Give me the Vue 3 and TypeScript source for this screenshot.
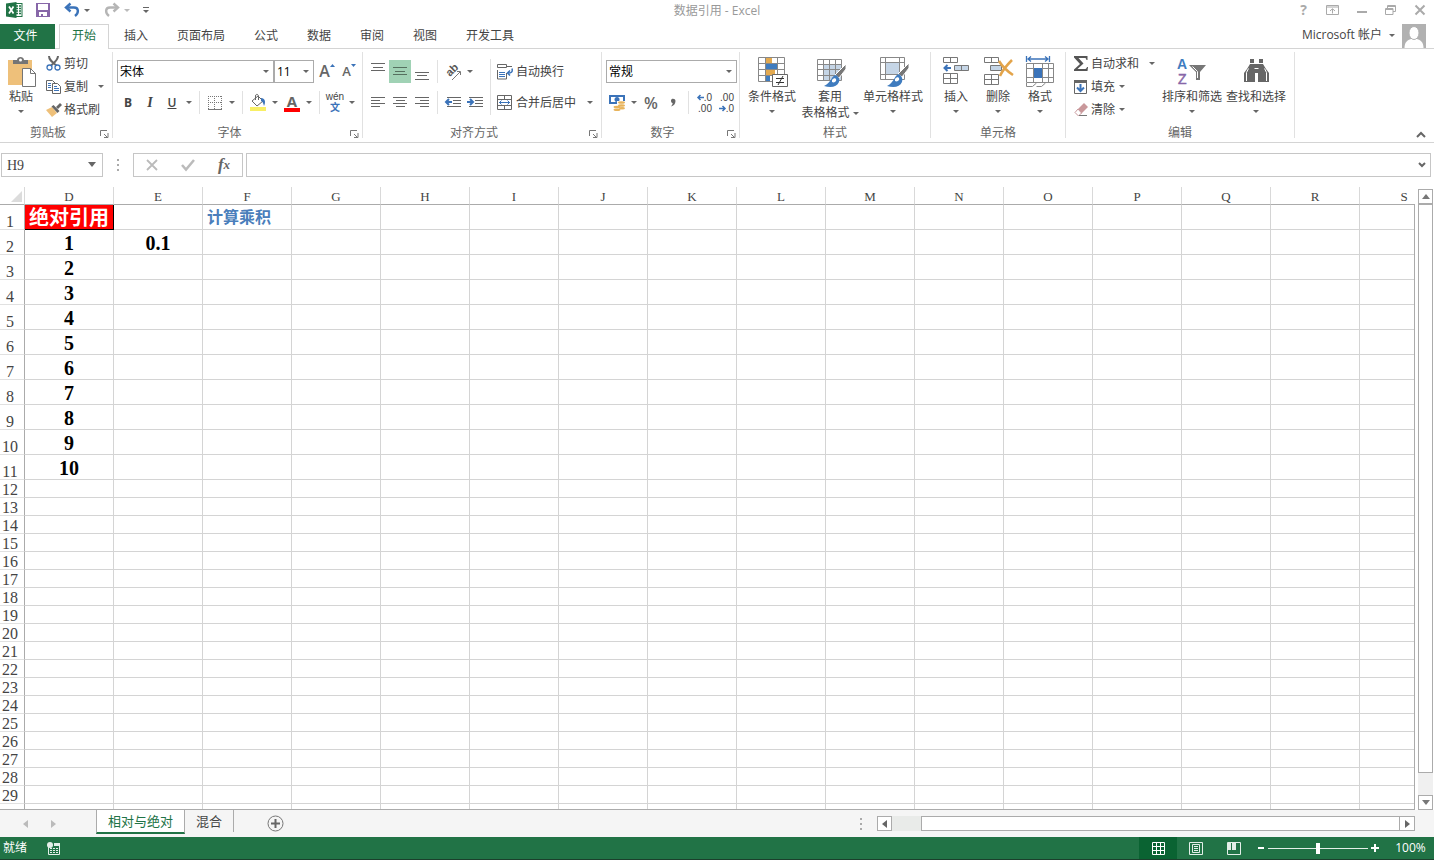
<script setup lang="ts">
import { ref } from 'vue'

interface SheetRow {
  n: number
  d?: string
  e?: string
}

const tabs = ['开始', '插入', '页面布局', '公式', '数据', '审阅', '视图', '开发工具']
const activeTab = ref('开始')
const columns = 'DEFGHIJKLMNOPQRS'.split('')
const rows: SheetRow[] = Array.from({ length: 29 }, (_, i) => {
  const n = i + 1
  return {
    n,
    d: n === 1 ? '绝对引用' : n <= 11 ? String(n - 1) : '',
    e: n === 2 ? '0.1' : '',
  }
})
const sheets = ['相对与绝对', '混合']
const activeSheet = ref('相对与绝对')
const cellName = ref('H9')
const formula = ref('')
const zoom = ref(50)

function cellText(row: SheetRow, col: string): string {
  if (col === 'D') return row.d ?? ''
  if (col === 'E') return row.e ?? ''
  if (col === 'F' && row.n === 1) return '计算乘积'
  return ''
}
</script>

<template>
  <div class="app">
    <header class="titlebar">
      <div class="quick">
        <svg class="logo" width="18" height="18" viewBox="0 0 18 18">
          <rect x="9" y="2.5" width="7" height="13" fill="#fff" stroke="#217346" />
          <path d="M10 5h2M13 5h2M10 7.500h2M13 7.500h2M10 10h2M13 10h2M10 12.500h2M13 12.500h2" stroke="#217346" stroke-width="1.500" />
          <path d="M0 2.500L10.500 1v16L0 15.500z" fill="#217346" />
          <path d="M3 5.500l4.500 7M7.500 5.500l-4.500 7" stroke="#fff" stroke-width="1.700" />
        </svg>
        <button class="q save" aria-label="保存">
          <svg width="14" height="14" viewBox="0 0 14 14" shape-rendering="crispEdges">
            <path d="M0 0h14v14H0z" fill="#8767a8" />
            <path d="M2 1h10v6H2zM3 9h8v4H7v-2H5v2H3z" fill="#fff" />
          </svg>
        </button>
        <button class="q" aria-label="撤消">
          <svg width="16" height="16" viewBox="0 0 16 16" fill="none" stroke="#3b73b9" stroke-width="2.400">
            <path d="M6.500 1.500L2 5.500l4.500 4" />
            <path d="M2 5.500h8c5 0 5 5.500 1 8.500" />
          </svg>
          <i class="arr"></i>
        </button>
        <button class="q redo" aria-label="恢复">
          <svg width="16" height="16" viewBox="0 0 16 16" fill="none" stroke="#b5b5b5" stroke-width="2.400">
            <path d="M9.500 1.500L14 5.500l-4.500 4" />
            <path d="M14 5.500H6C1 5.500 1 11 5 14" />
          </svg>
          <i class="arr pale"></i>
        </button>
        <button class="q custom" aria-label="自定义快速访问工具栏"><i class="bar"></i><i class="arr"></i></button>
      </div>
      <h1>数据引用 - Excel</h1>
      <div class="winctl">
        <button aria-label="帮助" class="help">?</button>
        <button aria-label="功能区显示选项">
          <svg width="13" height="10" viewBox="0 0 13 10" fill="none" stroke="#aaa">
            <path d="M.5.5h12v9H.5zM0 2h13M6.500 8.500V4M4 6l2.500-2.300L9 6" />
          </svg>
        </button>
        <button aria-label="最小化">
          <svg width="10" height="10"><path d="M0 7h10" stroke="#aaa" stroke-width="2" /></svg>
        </button>
        <button aria-label="还原">
          <svg width="11" height="10" viewBox="0 0 11 10" fill="none" stroke="#aaa">
            <path d="M2.500 3V.5h8v6H8M2 1.500h9M.5 3.500H8v6H.5zM0 4.500h8" />
          </svg>
        </button>
        <button aria-label="关闭">
          <svg width="10" height="10"><path d="M.5.5l9 9M9.500.5l-9 9" stroke="#aaa" stroke-width="2" /></svg>
        </button>
      </div>
    </header>

    <nav class="tabs">
      <button class="file">文件</button>
      <button v-for="t in tabs" :key="t" class="tab" :class="{ on: t === activeTab }" @click="activeTab = t">{{ t }}</button>
      <button class="account">Microsoft 帐户<i class="arr"></i></button>
      <svg class="avatar" width="24" height="24" viewBox="0 0 24 24">
        <path d="M0 0h24v24H0z" fill="#b1b1b1" />
        <path d="M2.500 24c0-6 3-8 6.500-9h6c3.500 1 6.500 3 6.500 9z" fill="#fff" />
        <ellipse cx="12" cy="9" rx="5" ry="6.500" fill="#fff" stroke="#b1b1b1" />
      </svg>
    </nav>

    <section class="ribbon">
      <div class="group clip">
        <div class="body">
          <button class="big">
            <svg width="32" height="32" viewBox="0 0 32 32">
              <path d="M3 4h24v25H3z" fill="#eec07a" />
              <path d="M8 8V4h4c0-4 7-4 7 0h4v4z" fill="#757575" />
              <circle cx="15.500" cy="4" r="1.500" fill="#fff" />
              <path d="M17.500 12.500h8l5 5v13h-13z" fill="#fff" stroke="#757575" />
              <path d="M25.500 12.500v5h5" fill="none" stroke="#757575" />
            </svg>
            <span>粘贴</span><i class="arr"></i>
          </button>
          <div class="smalls">
            <button>
              <svg width="16" height="16" viewBox="0 0 16 16" fill="none">
                <path d="M3 0c0 4 3 6 7.500 9.500M12 0c0 4-3 6-7 9.500" stroke="#666" stroke-width="2" />
                <circle cx="3.500" cy="11.500" r="2.500" stroke="#3b73b9" stroke-width="1.300" />
                <circle cx="11.500" cy="11.500" r="2.500" stroke="#3b73b9" stroke-width="1.300" />
              </svg>剪切
            </button>
            <button>
              <svg width="16" height="16" viewBox="0 0 16 16" fill="#fff" stroke="#666">
                <path d="M.5 1.500h6l3 3v7h-9z" /><path d="M6.500 4.500h5l3 3v7h-8z" />
                <path d="M2 4.500h3M2 6.500h3M2 8.500h3M8 9.500h5M8 11.500h5M8 7.500h3" stroke="#3b73b9" />
              </svg>复制<i class="arr far"></i>
            </button>
            <button>
              <svg width="16" height="16" viewBox="0 0 16 16">
                <path d="M0 8l6-3 5 6-5 4z" fill="#eec07a" />
                <path d="M5.500 4.500l2-1.500 6 6-2 2z" fill="#666" /><path d="M10 5l4-4 2 2-4 4z" fill="#666" />
              </svg>格式刷
            </button>
          </div>
        </div>
        <footer><span>剪贴板</span><button class="launch" aria-label="剪贴板选项"><svg width="9" height="8" viewBox="0 0 9 8" fill="none" stroke="#777"><path d="M.5 6V.5H7M4 4l3 3M8 3v4.500H4" /></svg></button></footer>
      </div>

      <div class="group font">
        <div class="body rows">
          <div class="line">
            <span class="sel face"><select aria-label="字体"><option>宋体</option></select><i class="arr"></i></span>
            <span class="sel size"><select aria-label="字号"><option>11</option></select><i class="arr"></i></span>
            <button class="ib w22 grow" aria-label="增大字号">A<svg width="5" height="3"><path d="M0 3l2.500-3L5 3z" fill="#3b73b9" /></svg></button>
            <button class="ib w22 grow less" aria-label="减小字号">A<svg width="5" height="3"><path d="M0 0l2.500 3L5 0z" fill="#3b73b9" /></svg></button>
          </div>
          <div class="line">
            <button class="ib w22 bold" aria-label="加粗">B</button>
            <button class="ib w22 ital" aria-label="倾斜">I</button>
            <button class="ib w22 und" aria-label="下划线"><u>U</u></button>
            <button class="ib w12" aria-label="下划线样式"><i class="arr"></i></button>
            <i class="sep"></i>
            <button class="ib w22" aria-label="边框">
              <svg width="14" height="14" viewBox="0 0 14 14" fill="none" stroke="#777" shape-rendering="crispEdges">
                <path d="M0 .5h14M.5 0v14M13.500 0v14M6.500 0v14M0 6.500h14" stroke-dasharray="1 1" /><path d="M0 13.500h14" />
              </svg>
            </button>
            <button class="ib w12" aria-label="边框样式"><i class="arr"></i></button>
            <i class="sep"></i>
            <button class="ib w22" aria-label="填充颜色">
              <svg width="16" height="17" viewBox="0 0 16 17">
                <path d="M2 7l6-5 5 5-6 5z" fill="#fff" stroke="#666" /><path d="M5.500 6V2c0-2.500 3.500-2 3 1v3" fill="none" stroke="#666" />
                <path d="M11 4c4 0 5 4 3 8-1-3-1-4-3-5z" fill="#3b73b9" /><path d="M0 13h16v4H0z" fill="#f8ef65" />
              </svg>
            </button>
            <button class="ib w12" aria-label="选择填充颜色"><i class="arr"></i></button>
            <button class="ib w22 color" aria-label="字体颜色">A</button>
            <button class="ib w12" aria-label="选择字体颜色"><i class="arr"></i></button>
            <i class="sep"></i>
            <button class="ib w22 wen" aria-label="拼音"><span>wén</span><b>文</b></button>
            <button class="ib w12" aria-label="拼音设置"><i class="arr"></i></button>
          </div>
        </div>
        <footer><span>字体</span><button class="launch" aria-label="字体选项"><svg width="9" height="8" viewBox="0 0 9 8" fill="none" stroke="#777"><path d="M.5 6V.5H7M4 4l3 3M8 3v4.500H4" /></svg></button></footer>
      </div>

      <div class="group align">
        <div class="body">
          <div class="rows">
            <div class="line">
              <button class="ib w22" aria-label="顶端对齐"><svg width="14" height="18"><path d="M0 .5h14M2 4.500h10M0 7.500h14" stroke="#666" /></svg></button>
              <button class="ib w22 pressed" aria-label="垂直居中"><svg width="14" height="18"><path d="M0 4.500h14M2 8.500h10M0 11.500h14" stroke="#55705f" /></svg></button>
              <button class="ib w22" aria-label="底端对齐"><svg width="14" height="18"><path d="M0 9.500h14M2 12.500h10M0 16.500h14" stroke="#666" /></svg></button>
              <i class="sep"></i>
              <button class="ib w22" aria-label="方向">
                <svg class="glyphs" width="18" height="18" viewBox="0 0 18 18"><text transform="translate(6 14) rotate(-45)" font-size="11" font-weight="600" fill="#555">ab</text><path d="M8 17l8-8M16.500 12V8.500H13" stroke="#777" fill="none" /></svg>
              </button>
              <button class="ib w12" aria-label="方向选项"><i class="arr"></i></button>
            </div>
            <div class="line">
              <button class="ib w22" aria-label="左对齐"><svg width="14" height="11"><path d="M0 .5h14M0 3.500h9M0 6.500h14M0 9.500h9" stroke="#666" /></svg></button>
              <button class="ib w22" aria-label="居中"><svg width="14" height="11"><path d="M0 .5h14M3 3.500h9M0 6.500h14M3 9.500h9" stroke="#666" /></svg></button>
              <button class="ib w22" aria-label="右对齐"><svg width="14" height="11"><path d="M0 .5h14M5 3.500h9M0 6.500h14M5 9.500h9" stroke="#666" /></svg></button>
              <i class="sep"></i>
              <button class="ib w22" aria-label="减少缩进量"><svg width="16" height="11"><path d="M2 .5h14M8 3.500h8M8 6.500h8M2 9.500h14" stroke="#666" /><path d="M7 5H2M4 2L1 5l3 3" stroke="#3b73b9" stroke-width="2" fill="none" /></svg></button>
              <button class="ib w22" aria-label="增加缩进量"><svg width="16" height="11"><path d="M2 .5h14M8 3.500h8M8 6.500h8M2 9.500h14" stroke="#666" /><path d="M0 5h5M3 2l3 3-3 3" stroke="#3b73b9" stroke-width="2" fill="none" /></svg></button>
            </div>
          </div>
          <div class="rows wraps">
            <button class="ib">
              <svg width="16" height="16" viewBox="0 0 16 16" fill="none" stroke="#666">
                <path d="M.5.5h9v3h-9zM10 2.500h5M.5 6v9h9V9" /><path d="M2 8.500h6M2 10.500h6M2 12.500h6" stroke="#3b73b9" />
                <path d="M15 4.500c1 4-1 4.500-4 4.500M13 6.500l-2.500 2.500 2.500 2.500" stroke="#3b73b9" stroke-width="1.500" />
              </svg>自动换行
            </button>
            <button class="ib">
              <svg width="16" height="16" viewBox="0 0 16 16" fill="none" stroke="#666">
                <path d="M.5.5h14v14H.5zM.5 4.500h14M.5 10.500h14M7.500 0v4M7.500 11v4" /><path d="M2 7.500h11M4.500 5.500l-2 2 2 2M10.500 5.500l2 2-2 2" stroke="#3b73b9" />
              </svg>合并后居中<i class="arr far"></i>
            </button>
          </div>
        </div>
        <footer><span>对齐方式</span><button class="launch" aria-label="对齐选项"><svg width="9" height="8" viewBox="0 0 9 8" fill="none" stroke="#777"><path d="M.5 6V.5H7M4 4l3 3M8 3v4.500H4" /></svg></button></footer>
      </div>

      <div class="group number">
        <div class="body rows">
          <div class="line">
            <span class="sel fmt"><select aria-label="数字格式"><option>常规</option></select><i class="arr"></i></span>
          </div>
          <div class="line">
            <button class="ib w22" aria-label="会计数字格式">
              <svg width="16" height="16" viewBox="0 0 16 16">
                <path d="M0 0h16v9H0z" fill="#3b73b9" /><path d="M2 2h12v5H2z" fill="#fff" /><circle cx="8" cy="4.500" r="2.500" fill="#3b73b9" />
                <path d="M8 6h8v9H4v-4h4z" fill="#fff" />
                <g fill="#e8b45c"><ellipse cx="12.500" cy="7.500" rx="3.500" ry="1.300" /><ellipse cx="12.500" cy="10.500" rx="3.500" ry="1.300" /><ellipse cx="8" cy="12" rx="3.500" ry="1.300" /><ellipse cx="8" cy="14.700" rx="3.500" ry="1.300" /><ellipse cx="13" cy="13.300" rx="3" ry="1.200" /></g>
              </svg>
            </button>
            <button class="ib w12" aria-label="货币选项"><i class="arr"></i></button>
            <button class="ib w22 pct" aria-label="百分比样式">%</button>
            <button class="ib w22 comma" aria-label="千位分隔样式"><svg width="6" height="9"><path d="M1 2.500C1 0 5.500 0 5.500 3S3.500 8 1 8.500C2 7 3 6 2.500 5 1.500 5 1 4 1 2.500z" fill="#666" /></svg></button>
            <i class="sep"></i>
            <button class="ib w22 dec" aria-label="增加小数位数"><span><svg width="7" height="7"><path d="M7 3.500H1M3.500 1L1 3.500 3.500 6" stroke="#3b73b9" stroke-width="1.500" fill="none" /></svg>.0</span><span>.00</span></button>
            <button class="ib w22 dec" aria-label="减少小数位数"><span>.00</span><span><svg width="7" height="7"><path d="M0 3.500h6M3.500 1L6 3.500 3.500 6" stroke="#3b73b9" stroke-width="1.500" fill="none" /></svg>.0</span></button>
          </div>
        </div>
        <footer><span>数字</span><button class="launch" aria-label="数字选项"><svg width="9" height="8" viewBox="0 0 9 8" fill="none" stroke="#777"><path d="M.5 6V.5H7M4 4l3 3M8 3v4.500H4" /></svg></button></footer>
      </div>

      <div class="group styles">
        <div class="body">
          <button class="big w56">
            <svg width="32" height="32" viewBox="0 0 32 32" fill="none" stroke="#888">
              <path d="M2.500 1.500h26v24h-26zM2.500 7.500h26M2.500 13.500h26M2.500 19.500h26M9.500 1v25M21.500 1v25" />
              <path d="M10 2h6v5h-6zM10 14h9v5h-9z" fill="#e3a94f" stroke="none" /><path d="M10 8h11v5H10zM10 20h4v5h-4z" fill="#3f7cbf" stroke="none" />
              <path d="M16.500 18.500h15v12h-15z" fill="#fff" stroke="#666" /><path d="M20 22.500h8M20 26.500h8M27 20l-5 9" stroke="#333" />
            </svg>
            <span>条件格式</span><i class="arr"></i>
          </button>
          <button class="big w60">
            <svg width="32" height="32" viewBox="0 0 32 32" fill="none">
              <path d="M9 9h18v15H9z" fill="#c5d5e6" /><path d="M3.500 3.500h24v21h-24zM3.500 8.500h24M3.500 13.500h24M3.500 19.500h24M9.500 3v22M15.500 3v22M21.500 3v22" stroke="#888" />
              <path d="M32 8v5l-7 9-4-3z" fill="#777" stroke="#fff" /><path d="M22 19c-5 1-4 7-12 11 7 2 13 1 15-4 1-3 0-5-3-7z" fill="#3f7cbf" /><path d="M18 24c2-3 5-2 4 1-1 1-2 2-4 1z" fill="#fff" />
            </svg>
            <span>套用</span><span>表格格式<i class="arr in"></i></span>
          </button>
          <button class="big w66">
            <svg width="32" height="32" viewBox="0 0 32 32" fill="none">
              <path d="M3.500 1.500h24v22h-24zM3.500 6.500h24M3.500 18.500h24M8.500 1v22M22.500 1v22" stroke="#888" /><path d="M9 7h13v11H9z" fill="#c5d5e6" />
              <path d="M32 7v5l-7 9-4-3z" fill="#777" stroke="#fff" /><path d="M22 18c-5 1-4 8-12 12 7 2 13 1 15-4 1-3 0-6-3-8z" fill="#3f7cbf" /><path d="M18 23c2-3 5-2 4 1-1 1-2 2-4 1z" fill="#fff" />
            </svg>
            <span>单元格样式</span><i class="arr"></i>
          </button>
        </div>
        <footer><span>样式</span></footer>
      </div>

      <div class="group cells">
        <div class="body">
          <button class="big">
            <svg width="32" height="32" viewBox="0 0 32 32" fill="none" stroke="#777">
              <path d="M3.500 1.500h14v5h-14zM10.500 1.500v5M3.500 17.500h14v10h-14zM10.500 17v11M3.500 22.500h14" /><path d="M14.500 9.500h14v5h-14zM21.500 9.500v5" fill="#c5d5e6" />
              <path d="M11 12H5M7.500 9l-3 3 3 3" stroke="#3b73b9" stroke-width="2" />
            </svg>
            <span>插入</span><i class="arr"></i>
          </button>
          <button class="big">
            <svg width="32" height="32" viewBox="0 0 32 32" fill="none" stroke="#777">
              <path d="M2.500 1.500h14v5h-14zM9.500 1.500v5M2.500 18.500h14v10h-14zM9.500 18v11M2.500 23.500h14" /><path d="M8.500 9.500h11v5h-11z" fill="#c5d5e6" />
              <path d="M17 5c3 5 8 10 14 14M30 4c-5 5-9 9-12 16" stroke="#e3a44a" stroke-width="2.500" />
            </svg>
            <span>删除</span><i class="arr"></i>
          </button>
          <button class="big">
            <svg width="32" height="32" viewBox="0 0 32 32" fill="none" stroke="#888">
              <path d="M2.500 7.500h27v19h-27zM2.500 12.500h27M2.500 21.500h27M9.500 7v20M18.500 7v20M24.500 7v20M2.500 27v3.500h6l4-3.500M12.500 30.500h5l4-3.500" /><path d="M10 12h8v10h-8z" fill="#3b73b9" stroke="none" />
              <path d="M2.500 0v6M25.500 0v6M4 3h20M7 .5L4 3l3 2.500M21 .5L24 3l-3 2.500" stroke="#3b73b9" stroke-width="1.300" />
            </svg>
            <span>格式</span><i class="arr"></i>
          </button>
        </div>
        <footer><span>单元格</span></footer>
      </div>

      <div class="group edit">
        <div class="body">
          <div class="smalls">
            <button><svg width="16" height="16"><path d="M1 0h13.500v4h-1c-.5-2-1-2-2-2H5.500l5 5.500L4.500 13h7c1.500 0 2-.5 2.500-2h1l-.5 4H1v-1.500L7 8 1 1.500z" fill="#555" /></svg>自动求和<i class="arr far"></i></button>
            <button><svg width="16" height="16" fill="none"><path d="M1.500 1.500h12v13h-12z" stroke="#666" /><path d="M1 1h13v3H1z" fill="#666" /><path d="M7.500 5v7M4 8.500l3.500 3.500L11 8.500" stroke="#3b73b9" stroke-width="2" /></svg>填充<i class="arr"></i></button>
            <button><svg width="16" height="16"><path d="M5 7l6-6 4 4-7 7z" fill="#c9989b" /><path d="M5 7l-3 3.500L5.500 14 8.500 11z" fill="#fff" stroke="#c9989b" /><path d="M6 13.500h8" stroke="#777" /></svg>清除<i class="arr"></i></button>
          </div>
          <button class="big w62">
            <svg class="glyphs" width="32" height="32" viewBox="0 0 32 32">
              <text x="1" y="13" font-size="14" font-weight="700" fill="#3f7cbf">A</text><text x="2" y="28" font-size="14" fill="#8767a8" stroke="#8767a8" stroke-width=".5">Z</text>
              <path d="M13 9h17l-6 7v8h-4v-8z" fill="#777" /><path d="M16.500 10.500l5 5V22" fill="none" stroke="#fff" />
            </svg>
            <span>排序和筛选</span><i class="arr"></i>
          </button>
          <button class="big w66">
            <svg width="32" height="32" viewBox="0 0 32 32" fill="#666">
              <path d="M10 3h4v5h5V3h4v5l3 5 3 4v9H18v-9h-3v9H4v-9l3-4 3-5z" /><path d="M10 7.500h4M19 7.500h4M6.500 25V16.500l2-4M26.500 25V16.500l-2-4M14.500 12.500h4" stroke="#fff" fill="none" />
            </svg>
            <span>查找和选择</span><i class="arr"></i>
          </button>
        </div>
        <footer><span>编辑</span></footer>
      </div>
      <button class="collapse" aria-label="折叠功能区"><svg width="10" height="7"><path d="M1 6l4-4 4 4" fill="none" stroke="#666" stroke-width="2" /></svg></button>
    </section>

    <section class="fbar">
      <div class="name"><input v-model="cellName" aria-label="名称框" /><button aria-label="名称列表"><i class="arr wide"></i></button></div>
      <i class="dots"></i>
      <div class="fx">
        <button aria-label="取消"><svg width="12" height="12"><path d="M1 1l10 10M11 1L1 11" stroke="#bbb" stroke-width="1.800" /></svg></button>
        <button aria-label="输入"><svg width="14" height="12"><path d="M1 6l4 4.500L13 1" stroke="#bbb" stroke-width="2.500" fill="none" /></svg></button>
        <button aria-label="插入函数" class="fn">f<sub>x</sub></button>
      </div>
      <div class="formula"><input v-model="formula" aria-label="编辑栏" /><button aria-label="展开编辑栏"><svg width="8" height="6"><path d="M1 1l3 3 3-3" fill="none" stroke="#666" stroke-width="2" /></svg></button></div>
    </section>

    <main class="sheet">
      <div class="gridwrap">
        <table>
          <colgroup><col class="rh" /><col v-for="c in columns" :key="c" class="c" /></colgroup>
          <thead>
            <tr>
              <th class="corner"><svg width="11" height="11"><path d="M11 0v11H0z" fill="#dcdcdc" /></svg></th>
              <th v-for="c in columns" :key="c" scope="col">{{ c }}</th>
            </tr>
          </thead>
          <tbody>
            <tr v-for="r in rows" :key="r.n" :class="{ tall: r.n <= 11 }">
              <th scope="row">{{ r.n }}</th>
              <td v-for="c in columns" :key="c" :class="{ key: c === 'D' && r.n === 1, note: c === 'F' }">{{ cellText(r, c) }}</td>
            </tr>
            <tr><th></th><td v-for="c in columns" :key="c"></td></tr>
          </tbody>
        </table>
      </div>
      <div class="vscroll">
        <button aria-label="向上滚动"><svg width="8" height="5"><path d="M0 5l4-5 4 5z" fill="#777" /></svg></button>
        <div class="vthumb"></div>
        <div class="vtrack"></div>
        <button aria-label="向下滚动"><svg width="8" height="5"><path d="M0 0l4 5 4-5z" fill="#777" /></svg></button>
      </div>
    </main>

    <div class="sheetbar">
      <div class="navs">
        <button aria-label="上一张工作表"><svg width="5" height="8"><path d="M5 0v8L0 4z" fill="#bbb" /></svg></button>
        <button aria-label="下一张工作表"><svg width="5" height="8"><path d="M0 0v8l5-4z" fill="#bbb" /></svg></button>
      </div>
      <button v-for="s in sheets" :key="s" class="stab" :class="{ on: s === activeSheet }" @click="activeSheet = s">{{ s }}</button>
      <button class="add" aria-label="新工作表"><svg width="17" height="17" fill="none" stroke="#777"><circle cx="8.500" cy="8.500" r="7.500" /><path d="M8.500 4v9M4 8.500h9" stroke-width="2" stroke="#666" /></svg></button>
      <i class="dots"></i>
      <div class="hscroll">
        <button aria-label="向左滚动"><svg width="5" height="8"><path d="M5 0v8L0 4z" fill="#666" /></svg></button>
        <div class="htrack"></div>
        <div class="hthumb"></div>
        <button aria-label="向右滚动"><svg width="5" height="8"><path d="M0 0v8l5-4z" fill="#666" /></svg></button>
      </div>
    </div>

    <footer class="status">
      <span class="ready">就绪</span>
      <button class="macro" aria-label="录制宏">
        <svg width="13" height="13" viewBox="0 0 13 13"><path d="M1.500 5v7.500h11v-9H7" fill="none" stroke="#e3efe8" /><path d="M7 1h6v3H7z" fill="#e3efe8" /><circle cx="3" cy="3" r="3" fill="#e3efe8" /><path d="M3 6.500h2M6 6.500h2M9 6.500h2M3 8.500h2M6 8.500h2M9 8.500h2M3 10.500h2M6 10.500h2M9 10.500h2" stroke="#e3efe8" /></svg>
      </button>
      <div class="views">
        <button class="on" aria-label="普通"><svg width="13" height="13" fill="none" stroke="#fff"><path d="M.5.5h12v12H.5zM4.500 0v13M8.500 0v13M0 4.500h13M0 8.500h13" /></svg></button>
        <button aria-label="页面布局视图"><svg width="14" height="13" fill="none" stroke="#e3efe8"><path d="M.5.5h13v12H.5zM3.500 2.500h7v8h-7zM5 4.500h4M5 6.500h4M5 8.500h4" /></svg></button>
        <button aria-label="分页预览"><svg width="14" height="13" fill="none" stroke="#e3efe8"><path d="M.5.5h13v12H.5z" /><path d="M1 1h3v7H1zM5 1h4v7H5z" fill="#e3efe8" stroke="none" /></svg></button>
      </div>
      <div class="zoom">
        <button aria-label="缩小"><svg width="8" height="8"><path d="M1 4h6" stroke="#fff" stroke-width="2" /></svg></button>
        <input v-model="zoom" type="range" min="0" max="100" aria-label="显示比例" />
        <button aria-label="放大"><svg width="8" height="8"><path d="M0 4h8M4 0v8" stroke="#fff" stroke-width="2" /></svg></button>
        <button class="pc">100%</button>
      </div>
    </footer>
  </div>
</template>

<style>
body {
  margin: 0;
}
</style>

<style scoped>
* {
  box-sizing: border-box;
}
.app {
  display: flex;
  flex-direction: column;
  height: 100vh;
  overflow: hidden;
  background: #fff;
  color: #444;
  font: 12px/16px 'Open Sans', 'Noto Sans CJK SC', sans-serif;
}
button,
input,
select {
  font: inherit;
  color: inherit;
  background: none;
  border: 0;
  border-radius: 0;
  padding: 0;
  margin: 0;
  outline: 0;
}
button {
  display: flex;
  align-items: center;
  justify-content: center;
  flex: none;
  white-space: nowrap;
}
svg {
  display: block;
  flex: none;
  overflow: visible;
}
.arr {
  flex: none;
  border: 3px solid transparent;
  border-top-color: #666;
  border-bottom: 0;
}
.arr.pale {
  border-top-color: #bbb;
}
.arr.wide {
  border-width: 5px 4px 0;
}

/* title bar */
.titlebar {
  display: grid;
  grid-template-columns: 1fr auto 1fr;
  align-items: start;
  height: 24px;
  flex: none;
}
.titlebar h1 {
  margin: 3px 0 0;
  font-size: 12px;
  font-weight: 400;
  color: #999;
}
.quick {
  display: flex;
  align-items: center;
  height: 20px;
  padding-left: 6px;
}
.q {
  gap: 4px;
  margin-left: 8px;
}
.q.save {
  margin: 0 6px 0 12px;
}
.q.redo {
  margin-left: 14px;
}
.q.custom {
  flex-direction: column;
  gap: 2px;
  margin-left: 13px;
}
.bar {
  width: 6px;
  height: 1px;
  background: #666;
}
.winctl {
  display: flex;
  justify-content: flex-end;
  height: 20px;
}
.winctl button {
  width: 29px;
}
.help {
  color: #aaa;
  font-size: 14px;
  font-weight: 700;
}

/* ribbon tabs */
.tabs {
  display: flex;
  height: 25px;
  flex: none;
  border-bottom: 1px solid #d4d4d4;
}
.tabs button {
  height: 24px;
}
.tabs .file {
  background: #217346;
  color: #fff;
  width: 55px;
  height: 25px;
  padding: 0 4px 2px 0;
  margin-right: 4px;
}
.tabs .tab {
  padding: 0 12px;
  margin-right: 5px;
}
.tabs .tab.on {
  color: #217346;
  background: #fff;
  height: 25px;
  padding: 0 12px 2px;
  border: 1px solid #d4d4d4;
  border-bottom: 0;
  margin-right: 3px;
}
.tabs .account {
  margin-left: auto;
  padding: 0 7px 2px;
  gap: 7px;
}
.avatar {
  margin-right: 8px;
}

/* ribbon */
.ribbon {
  display: flex;
  flex: none;
  height: 94px;
  padding: 3px 0 4px;
  border-bottom: 1px solid #d4d4d4;
}
.group {
  display: flex;
  flex-direction: column;
  flex: none;
  height: 86px;
  border-right: 1px solid #e1e1e1;
}
.clip {
  width: 113px;
}
.font {
  width: 250px;
}
.align {
  width: 239px;
}
.number {
  width: 138px;
}
.styles {
  width: 191px;
}
.cells {
  width: 135px;
}
.edit {
  width: 229px;
}
.body {
  display: flex;
  height: 72px;
}
.group footer {
  display: flex;
  height: 14px;
  line-height: 17px;
  color: #666;
}
.group footer span {
  flex: 1;
  text-align: center;
}
.launch {
  width: 16px;
  align-items: flex-end;
}
.big {
  flex-direction: column;
  justify-content: flex-start;
  width: 42px;
  padding-top: 4px;
}
.big svg {
  margin-bottom: 1px;
}
.big span {
  display: flex;
  align-items: center;
  height: 16px;
}
.big > .arr {
  margin-top: 5px;
}
.arr.in {
  margin-left: 3px;
}
.w56 {
  width: 56px;
}
.w60 {
  width: 60px;
}
.w62 {
  width: 62px;
}
.w66 {
  width: 66px;
}
.styles .body,
.cells .body {
  padding-left: 4px;
}
.smalls {
  display: flex;
  flex-direction: column;
  padding-left: 4px;
}
.smalls button {
  height: 23px;
  justify-content: flex-start;
  gap: 2px;
}
.smalls .arr,
.wraps .arr {
  margin-left: 2px;
}
.smalls .arr.far,
.wraps .arr.far {
  margin-left: 8px;
}
.edit .smalls {
  width: 95px;
  padding-left: 7px;
}
.rows {
  display: flex;
  flex-direction: column;
  gap: 8px;
  padding: 8px 0 0 4px;
}
.line {
  display: flex;
  align-items: center;
  height: 23px;
}
.ib {
  height: 23px;
}
.w22 {
  width: 22px;
}
.w12 {
  width: 12px;
}
.sep {
  width: 1px;
  height: 23px;
  margin: 0 4px;
  background: #e1e1e1;
  flex: none;
}
.sel {
  position: relative;
  display: flex;
  height: 23px;
  border: 1px solid #ababab;
}
.sel select {
  appearance: none;
  width: 100%;
  padding-left: 2px;
  color: #000;
}
.sel .arr {
  position: absolute;
  right: 4px;
  top: 9px;
}
.face {
  width: 157px;
}
.size {
  width: 40px;
  margin-right: 2px;
}
.fmt {
  width: 131px;
}
.grow {
  align-items: flex-start;
  font-size: 16px;
  line-height: 22px;
  font-weight: 600;
  color: #666;
}
.grow svg {
  margin-top: 4px;
}
.grow.less {
  font-size: 13px;
}
.bold {
  font-weight: 700;
}
.ital {
  font: italic 700 14px 'Liberation Serif', serif;
}
.und {
  font-weight: 600;
}
.color {
  flex-direction: column;
  font-size: 15px;
  line-height: 14px;
  font-weight: 700;
  color: #666;
}
.color::after {
  content: '';
  width: 16px;
  height: 4px;
  background: #f00;
}
.wen {
  flex-direction: column;
  font: 10px/10px 'Liberation Sans', 'Noto Sans CJK SC', sans-serif;
}
.wen b {
  color: #3b73b9;
  line-height: 11px;
}
.glyphs {
  font-family: 'Liberation Sans', sans-serif;
}
.pressed {
  background: #a0d2b5;
}
.wraps {
  padding-left: 7px;
  margin-left: 2px;
  position: relative;
}
.wraps::before {
  content: '';
  position: absolute;
  left: 0;
  top: 7px;
  width: 1px;
  height: 56px;
  background: #e1e1e1;
}
.align .rows:first-child {
  width: 125px;
}
.wraps .ib {
  justify-content: flex-start;
  gap: 3px;
}
.pct {
  font-size: 16px;
  font-weight: 600;
  color: #666;
}
.dec {
  flex-direction: column;
  align-items: flex-end;
  padding-right: 3px;
  font: 10px/11px 'Liberation Sans', sans-serif;
}
.dec span {
  display: flex;
  align-items: center;
}
.collapse {
  margin: auto 8px 0 auto;
}

/* formula bar */
.fbar {
  display: flex;
  align-items: center;
  flex: none;
  height: 44px;
  padding: 0 3px 0 1px;
}
.name,
.fx,
.formula {
  display: flex;
  height: 24px;
  border: 1px solid #c6c6c6;
}
.name {
  width: 102px;
}
.name input {
  flex: 1;
  min-width: 0;
  padding: 2px 0 0 5px;
  font: 14px 'Liberation Serif', serif;
}
.name button {
  width: 20px;
}
.name .arr {
  margin-bottom: 2px;
}
.dots {
  width: 2px;
  height: 12px;
  flex: none;
  background: repeating-linear-gradient(#aaa 0 2px, transparent 2px 5px);
}
.fbar .dots {
  margin: 0 14px;
}
.fx {
  width: 110px;
  margin-right: 3px;
}
.fx button {
  width: 36px;
}
.fx .fn {
  font: italic 700 17px 'Liberation Serif', serif;
  color: #666;
}
.fn sub {
  font-size: 13px;
}
.formula {
  flex: 1;
}
.formula input {
  flex: 1;
  min-width: 0;
}
.formula button {
  width: 16px;
}

/* worksheet */
.sheet {
  display: flex;
  flex: 1;
  min-height: 0;
}
.gridwrap {
  position: relative;
  flex: 1;
  min-width: 0;
  overflow: hidden;
  border-bottom: 1px solid #ababab;
}
.gridwrap::after {
  content: '';
  position: absolute;
  top: 17px;
  right: 0;
  bottom: 0;
  width: 1px;
  background: #ababab;
}
table {
  table-layout: fixed;
  width: 1449px;
  border-collapse: separate;
  border-spacing: 0;
}
col.rh {
  width: 25px;
}
col.c {
  width: 89px;
}
th,
td {
  padding: 0;
  overflow: hidden;
  white-space: nowrap;
}
thead th {
  height: 18px;
  padding-top: 2px;
  border-bottom: 1px solid #ababab;
  border-right: 1px solid #d9d9d9;
  font: 13px/15px 'Liberation Serif', serif;
  text-align: center;
}
.corner svg {
  margin-left: 11px;
}
tbody th {
  height: 18px;
  border-right: 1px solid #ababab;
  border-bottom: 1px solid #e1e1e1;
  padding-right: 4px;
  font: 16px/15px 'Liberation Serif', serif;
  text-align: center;
  vertical-align: bottom;
}
td {
  border-right: 1px solid #d4d4d4;
  border-bottom: 1px solid #d4d4d4;
  text-align: center;
  color: #000;
  font: 700 20px/17px 'Liberation Serif', 'Noto Sans CJK SC', serif;
}
.tall th,
.tall td {
  height: 25px;
}
.tall td {
  padding-top: 2px;
}
td.key {
  background: #f00;
  color: #fff;
  border-color: #000;
}
.tall td.note {
  font-size: 16px;
  color: #4a7ebb;
  text-align: left;
  padding: 0 0 0 4px;
}
.vscroll {
  display: flex;
  flex-direction: column;
  width: 15px;
  margin: 2px 1px 0 3px;
}
.vscroll button {
  height: 15px;
  border: 1px solid #ababab;
}
.vthumb {
  flex: 569;
  border: 1px solid #ababab;
}
.vtrack {
  flex: 22;
  background: #f0f0f0;
}

/* sheet tabs */
.sheetbar {
  display: flex;
  align-items: center;
  flex: none;
  height: 27px;
  background: #f5f5f5;
}
.navs {
  display: flex;
  width: 96px;
  padding-left: 11px;
}
.navs button {
  width: 28px;
  height: 24px;
}
.stab {
  align-self: flex-start;
  height: 24px;
  padding: 0 11px;
  font-size: 13px;
}
.stab.on {
  background: #fff;
  color: #217346;
  border: solid #ababab;
  border-width: 0 1px;
  border-bottom: 2px solid #217346;
}
.stab:not(.on) {
  border-right: 1px solid #ababab;
  height: 22px;
}
.add {
  margin: 0 auto 0 33px;
}
.hscroll {
  display: flex;
  width: 538px;
  height: 15px;
  margin: 0 19px 0 15px;
}
.hscroll button {
  width: 15px;
  border: 1px solid #ababab;
}
.htrack {
  flex: 29;
  background: #e9ebe9;
}
.hthumb {
  flex: 479;
  background: #fff;
  border: 1px solid #ababab;
}
.hscroll button:last-child {
  border-left: 0;
}
.hscroll button,
.vscroll button {
  background: #fff;
}

/* status bar */
.status {
  display: flex;
  align-items: center;
  flex: none;
  height: 23px;
  background: #217346;
  color: #fff;
  border-bottom: 1px solid #1b3f2c;
}
.ready {
  margin-left: 3px;
}
.macro {
  margin-left: 20px;
}
.views {
  display: flex;
  align-self: stretch;
  margin-left: auto;
}
.views button {
  width: 38px;
}
.views .on {
  background: #0a6332;
}
.zoom {
  display: flex;
  align-items: center;
  margin: 0 7px 0 4px;
}
.zoom input {
  appearance: none;
  width: 100px;
  height: 12px;
  margin: 0 3px;
  background: linear-gradient(#e3efe8, #e3efe8) center / 100% 1px no-repeat;
}
.zoom input::-webkit-slider-thumb {
  appearance: none;
  width: 4px;
  height: 11px;
  background: #fff;
}
.pc {
  width: 33px;
  margin-left: 15px;
  font-size: 12px;
}
</style>
